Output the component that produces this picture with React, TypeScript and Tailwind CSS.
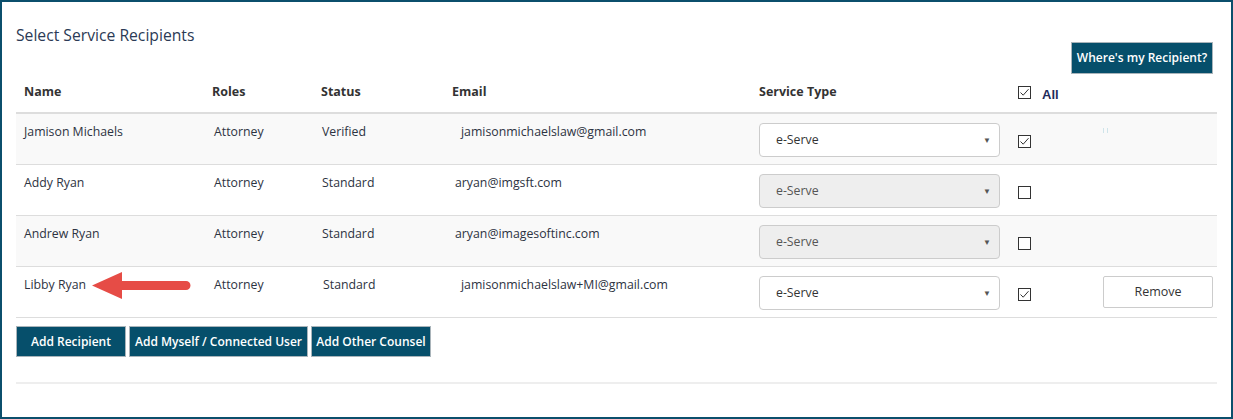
import React from "react";

type Recipient = {
  name: string;
  role: string;
  status: string;
  email: string;
  disabled: boolean;
  checked: boolean;
  removable?: boolean;
};

const recipients: Recipient[] = [
  { name: "Jamison Michaels", role: "Attorney", status: "Verified", email: "jamisonmichaelslaw@gmail.com", disabled: false, checked: true },
  { name: "Addy Ryan", role: "Attorney", status: "Standard", email: "aryan@imgsft.com", disabled: true, checked: false },
  { name: "Andrew Ryan", role: "Attorney", status: "Standard", email: "aryan@imagesoftinc.com", disabled: true, checked: false },
  { name: "Libby Ryan", role: "Attorney", status: "Standard", email: "jamisonmichaelslaw+MI@gmail.com", disabled: false, checked: true, removable: true },
];

const cols = "grid grid-cols-[188px_109px_131px_307px_259px_85px_1fr]";

function Checkbox({ checked }: { checked: boolean }) {
  return (
    <span className="flex h-[13px] w-[13px] items-center justify-center border border-[#333] bg-white">
      {checked && (
        <svg width="11" height="11" viewBox="0 0 11 11">
          <path d="M1.5 5.5 L4.2 8.2 L9.5 2.2" fill="none" stroke="#333" strokeWidth="1" />
        </svg>
      )}
    </span>
  );
}

function ServeSelect({ disabled }: { disabled: boolean }) {
  return (
    <div
      className={`flex h-[34px] w-[241px] items-center justify-between rounded-[4px] border border-[#ccc] pl-4 pr-[8px] text-[12.3px] ${
        disabled ? "bg-[#eeeeee] text-[#555]" : "bg-white text-[#333]"
      }`}
    >
      <span>e-Serve</span>
      <span className="text-[8px] text-[#555]">▼</span>
    </div>
  );
}

function DarkButton({ label, w }: { label: string; w: string }) {
  return (
    <button className={`h-[31px] ${w} border border-[#a9b4ba] bg-[#064f6b] text-[12px] font-semibold text-white`}>
      {label}
    </button>
  );
}

export default function App() {
  return (
    <div className="h-[419px] w-[1233px] border-2 border-[#0b4f6c] bg-white font-['Open_Sans',sans-serif] text-[#2d3342]">
      <div className="relative px-[14px] pt-[21px]">
        <div className="flex items-start justify-between">
          <h2 className="pt-[1px] text-[15.7px] leading-[22px] text-[#2b3a55]">Select Service Recipients</h2>
          <button className="mt-[19px] mr-[4px] h-[32px] w-[142px] border border-[#a9b4ba] bg-[#064f6b] text-[12px] font-semibold text-white">
            Where's my Recipient?
          </button>
        </div>

        <div className="w-[1201px]">
          {/* header */}
          <div className={`${cols} h-[40px] border-b-2 border-[#dddddd] text-[12.5px] font-bold text-[#333]`}>
            <div className="pl-2 pt-[9px]">Name</div>
            <div className="pl-2 pt-[9px]">Roles</div>
            <div className="pl-2 pt-[9px]">Status</div>
            <div className="pl-2 pt-[9px]">Email</div>
            <div className="pl-2 pt-[9px]">Service Type</div>
            <div className="flex items-start gap-[11px] pl-2 pt-[12px]">
              <Checkbox checked />
              <span className="-mt-[1px] font-['Liberation_Sans',sans-serif] text-[13px] font-bold text-[#1f2b5a]">All</span>
            </div>
            <div />
          </div>

          {recipients.map((r, i) => (
            <div
              key={r.name}
              className={`${cols} h-[51px] border-b border-[#dddddd] text-[12.3px] ${i % 2 === 0 ? "bg-[#f9f9f9]" : "bg-white"}`}
            >
              <div className="pl-2 pt-[9px]">{r.name}</div>
              <div className="pl-[10px] pt-[9px]">{r.role}</div>
              <div className={`${i === 3 ? "pl-[10px]" : "pl-[9px]"} pt-[9px]`}>{r.status}</div>
              <div className={`${i === 0 || i === 3 ? "pl-[17px]" : "pl-[11px]"} pt-[9px]`}>{r.email}</div>
              <div className="pl-2 pt-[9px]">
                <ServeSelect disabled={r.disabled} />
              </div>
              <div className="pl-2 pt-[21px]">
                <Checkbox checked={r.checked} />
              </div>
              <div className="pl-2 pt-[9px]">
                {r.removable && (
                  <button className="h-[32px] w-[110px] rounded-[2px] border border-[#cccccc] bg-white text-[12.5px] text-[#333]">
                    Remove
                  </button>
                )}
                {i === 0 && (
                  <div className="mt-[5px] flex gap-[3px]">
                    <span className="h-[5px] w-[1px] bg-[#cfe4ea]" />
                    <span className="h-[5px] w-[1px] bg-[#cfe4ea]" />
                  </div>
                )}
              </div>
            </div>
          ))}

          <div className="flex gap-[3px] pt-[8px]">
            <DarkButton label="Add Recipient" w="w-[110px]" />
            <DarkButton label="Add Myself / Connected User" w="w-[179px]" />
            <DarkButton label="Add Other Counsel" w="w-[120px]" />
          </div>

          <div className="mt-[25px] border-t-2 border-[#eeeeee]" />
        </div>

        {/* red arrow annotation */}
        <svg className="absolute left-[88px] top-[267px]" width="104" height="34" viewBox="0 0 104 34">
          <path d="M2 16.5 L32 3 L32 12 L96 12 A4.5 4.5 0 0 1 96 21 L32 21 L32 30 Z" fill="#e64c46" />
        </svg>
      </div>
    </div>
  );
}
